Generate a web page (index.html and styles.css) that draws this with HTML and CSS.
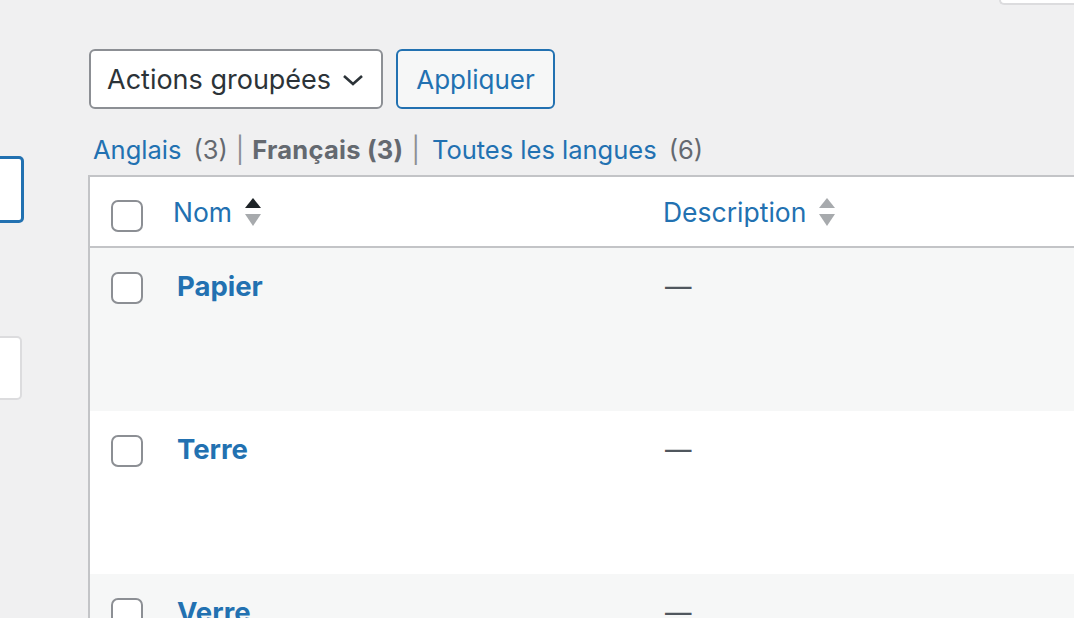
FILE: index.html
```html
<!DOCTYPE html>
<html lang="fr">

<head>
    <meta charset="UTF-8">
    <title>Étiquettes</title>
    <link rel="stylesheet" href="styles.css">
</head>

<body>
    <!-- Left column: add term form (cut off) -->
    <div class="side">
        <div class="field field-focus"></div>
        <div class="field field-plain"></div>
    </div>

    <div class="main">
        <div class="search-row">
            <div class="search-box"></div>
        </div>

        <!-- Bulk actions -->
        <div class="tablenav">
            <div class="select">
                <span>Actions groupées</span>
                <svg class="chevron" width="22" height="14" viewBox="0 0 22 14">
                    <path d="M2 3 L11 11 L20 3" fill="none" stroke="#2c3338" stroke-width="2.6" />
                </svg>
            </div>
            <button class="btn">Appliquer</button>
        </div>

        <!-- Language filter -->
        <ul class="subsubsub">
            <li><a href="#">Anglais</a><span class="count">(3)</span><span class="sep">|</span></li>
            <li><span class="current">Français (3)</span><span class="sep">|</span></li>
            <li class="last"><a href="#">Toutes les langues</a><span class="count">(6)</span></li>
        </ul>

        <!-- Terms table -->
        <div class="table">
            <div class="row head">
                <div class="cell check"><span class="box"></span></div>
                <div class="cell name">
                    <a href="#">Nom</a>
                    <svg class="sort" width="18" height="32" viewBox="0 0 18 32">
                        <path d="M9 1 L17 11 L1 11 Z" fill="#1d2327" />
                        <path d="M1 17 L17 17 L9 29 Z" fill="#a7aaad" />
                    </svg>
                </div>
                <div class="cell desc">
                    <a href="#">Description</a>
                    <svg class="sort" width="18" height="32" viewBox="0 0 18 32">
                        <path d="M9 1 L17 11 L1 11 Z" fill="#a7aaad" />
                        <path d="M1 17 L17 17 L9 29 Z" fill="#a7aaad" />
                    </svg>
                </div>
            </div>

            <div class="row alt">
                <div class="cell check"><span class="box"></span></div>
                <div class="cell name"><a class="term" href="#">Papier</a></div>
                <div class="cell desc"><span class="dash">—</span></div>
            </div>

            <div class="row">
                <div class="cell check"><span class="box"></span></div>
                <div class="cell name"><a class="term" href="#">Terre</a></div>
                <div class="cell desc"><span class="dash">—</span></div>
            </div>

            <div class="row alt">
                <div class="cell check"><span class="box"></span></div>
                <div class="cell name"><a class="term" href="#">Verre</a></div>
                <div class="cell desc"><span class="dash">—</span></div>
            </div>
        </div>
    </div>
</body>

</html>
```

FILE: styles.css
```css
/* Global */
* {
    margin: 0;
    padding: 0;
    box-sizing: border-box;
}

body {
    background: #f0f0f1;
    color: #2c3338;
    font-family: "Inter", "Noto Sans", sans-serif;
    font-size: 26.5px;
    display: flex;
    height: 618px;
    overflow: hidden;
}

a {
    color: #2271b1;
    text-decoration: none;
}

/* Left form column */
.side {
    width: 88px;
    flex-shrink: 0;
}

.field {
    background: white;
    border-radius: 0 5px 5px 0;
}

.field-focus {
    width: 24px;
    height: 67px;
    margin-top: 156px;
    border: 3px solid #2271b1;
    border-left: none;
}

.field-plain {
    width: 22px;
    height: 64px;
    margin-top: 113px;
    border: 2px solid #dcdcde;
    border-left: none;
}

/* Main */
.main {
    flex: 1;
    min-width: 0;
}

.search-row {
    display: flex;
    justify-content: flex-end;
    height: 49px;
}

.search-box {
    width: 75px;
    height: 30px;
    margin-top: -25px;
    background: white;
    border: 2px solid #dcdcde;
    border-right: none;
    border-radius: 5px 0 0 5px;
}

.tablenav {
    display: flex;
    gap: 13px;
    margin-left: 1px;
    height: 60px;
}

.select {
    width: 294px;
    display: flex;
    align-items: center;
    justify-content: space-between;
    padding: 0 17px 0 16px;
    background: white;
    border: 2px solid #8c8f94;
    border-radius: 6px;
    color: #2c3338;
    font-size: 27px;
}

.chevron {
    margin-top: 2px;
}

.btn {
    width: 159px;
    background: #f6f7f7;
    border: 2px solid #2271b1;
    border-radius: 6px;
    color: #2271b1;
    font: inherit;
    font-size: 26px;
}

/* Language filter */
.subsubsub {
    list-style: none;
    display: flex;
    margin: 27px 0 0 5px;
    height: 28px;
    line-height: 28px;
    font-size: 25.5px;
    color: #646970;
}

.subsubsub .count {
    margin-left: 12px;
}

.subsubsub .sep {
    margin: 0 8px;
    color: #8c8f94;
}

.subsubsub .last {
    padding-left: 4px;
}

.subsubsub .current {
    font-weight: 700;
    letter-spacing: 0.25px;
}

/* Table */
.table {
    margin-top: 11px;
    width: 1100px;
    border-top: 2px solid #c3c4c7;
    border-left: 2px solid #c3c4c7;
    background: white;
}

.row {
    display: grid;
    grid-template-columns: 70px 490px 1fr;
    height: 163px;
}

.row.alt {
    background: #f6f7f7;
}

.row.head {
    height: 71px;
    border-bottom: 2px solid #c3c4c7;
    background: white;
}

.cell {
    padding-top: 20px;
    line-height: 36px;
}

.check {
    padding-left: 21px;
    padding-top: 24px;
}

.head .cell {
    padding-top: 17px;
}

.head .check {
    padding-top: 23px;
}

.box {
    display: block;
    width: 32px;
    height: 32px;
    border: 2px solid #8c8f94;
    border-radius: 7px;
    background: white;
}

.name {
    padding-left: 13px;
}

.desc {
    padding-left: 13px;
}

.sort {
    vertical-align: middle;
    margin-left: 4px;
    margin-top: -4px;
}

.term {
    font-weight: 700;
    font-size: 27.5px;
    margin-left: 4px;
}

.dash {
    color: #50575e;
    margin-left: 2px;
}
```
